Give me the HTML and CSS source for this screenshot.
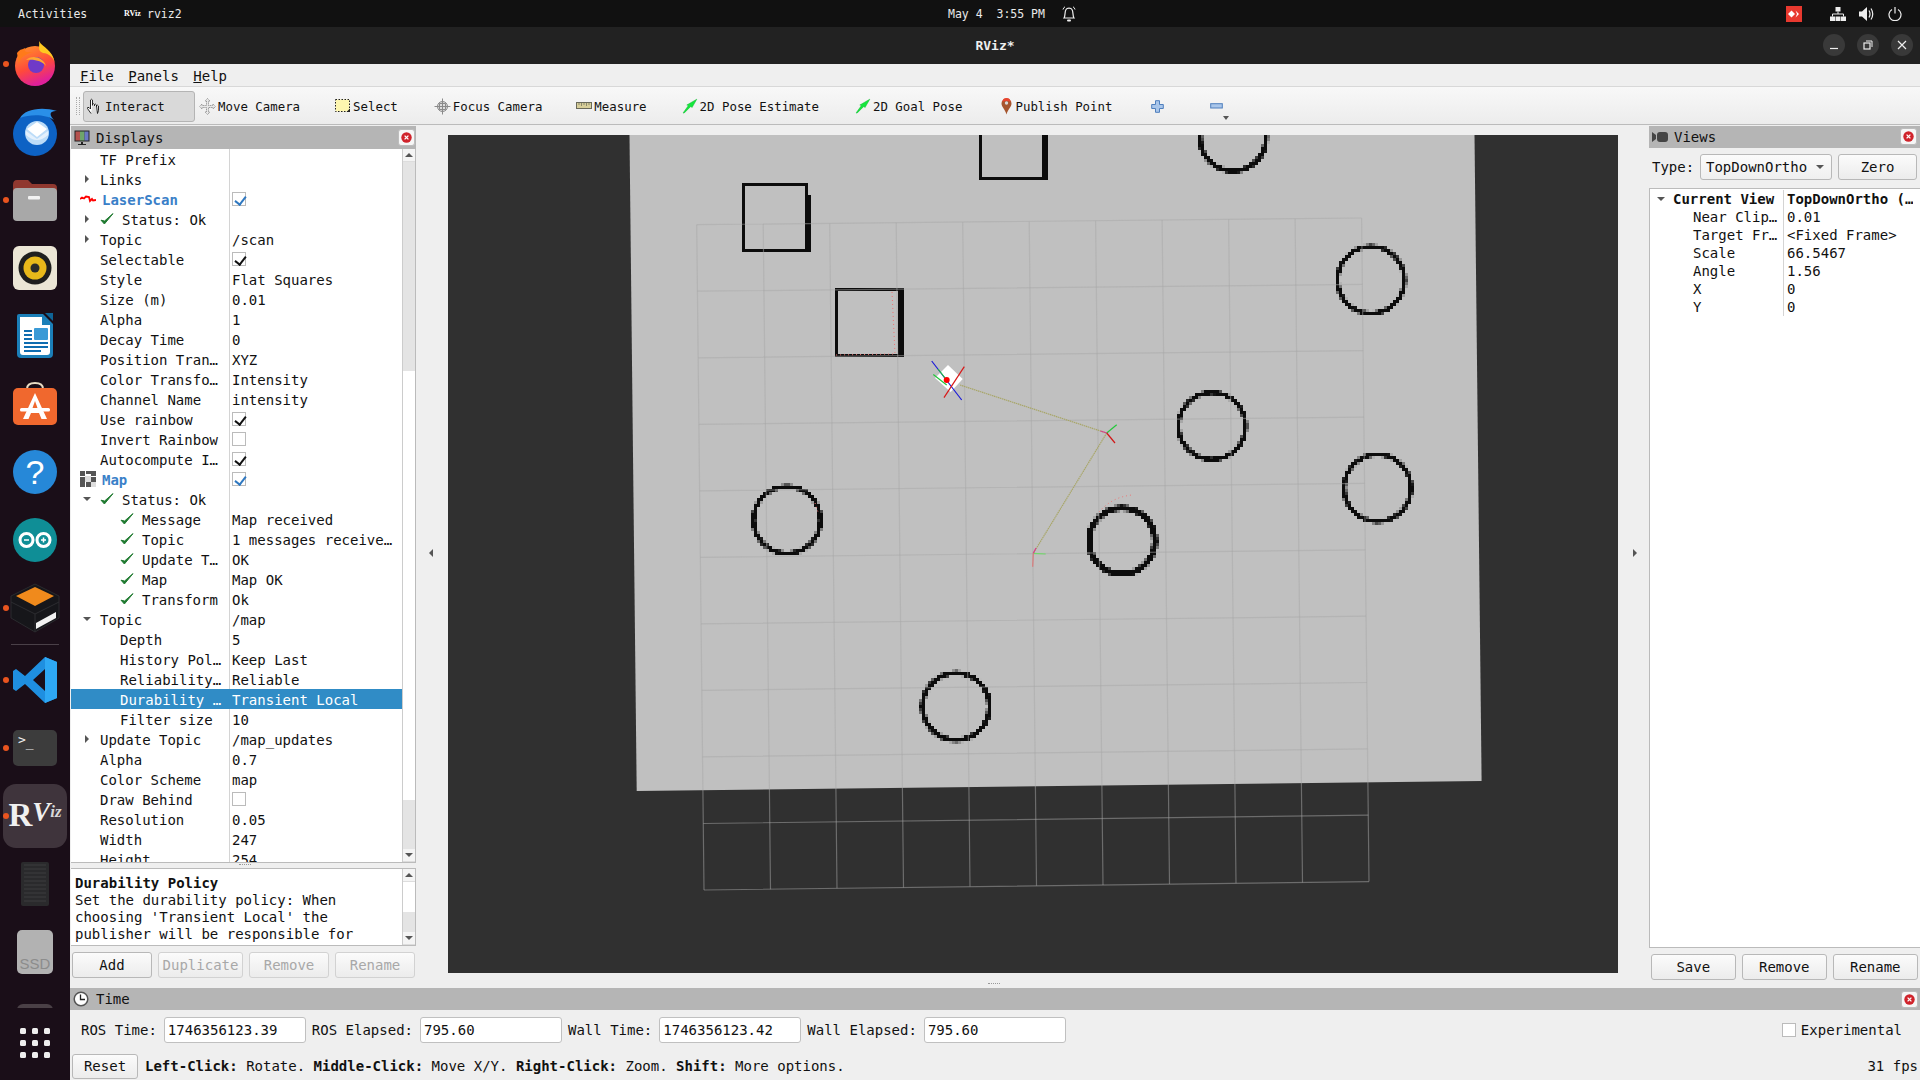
FILE: index.html
```html
<!DOCTYPE html>
<html lang="en">
<head>
<meta charset="utf-8">
<title>RViz*</title>
<link rel="stylesheet" href="styles.css">
</head>
<body>
<svg class="defs" width="0" height="0" aria-hidden="true">
  <symbol id="chk" viewBox="0 0 14 14"><path d="M1 8.200 L4.400 12 L13 1.600 L4.600 9 Z" fill="#1f7a30" stroke="#1f7a30" stroke-width="1"/></symbol>
  <symbol id="close" viewBox="0 0 17 17"><rect x=".5" y=".5" width="16" height="16" rx="2.500" fill="#f6f6f6" stroke="#bdbdbd"/><circle cx="8.500" cy="8.500" r="5.200" fill="#d0232b"/><path d="M6.600 6.600 L10.400 10.400 M10.400 6.600 L6.600 10.400" stroke="#fff" stroke-width="1.300"/></symbol>
  <symbol id="arrow" viewBox="0 0 20 20"><path d="M1.500 18.500 L8 9.500 L6 8.800 L18.500 1.500 L12.500 12 L11 10.500 L2.500 19 Z" fill="#14e83c" stroke="#0bb52c" stroke-width=".6"/></symbol>
  <filter id="px" filterUnits="userSpaceOnUse" x="448" y="135" width="1170" height="838" primitiveUnits="userSpaceOnUse" color-interpolation-filters="sRGB">
    <feFlood x="449" y="136" width="1" height="1" flood-color="#000"/>
    <feComposite x="448" y="135" width="3" height="3"/>
    <feTile result="a"/>
    <feComposite in="SourceGraphic" in2="a" operator="in"/>
    <feMorphology operator="dilate" radius="1"/>
  </filter>
</svg>

<header class="topbar">
  <span class="tb-act">Activities</span>
  <span class="tb-logo">RViz</span>
  <span class="tb-app">rviz2</span>
  <span class="tb-clock">May 4&nbsp;&nbsp;3:55 PM</span>
  <svg class="tb-bell" width="14" height="16" viewBox="0 0 14 16"><path d="M2 12 C3.500 10 2.500 6 4 3.500 C5 1.600 9 1.600 10 3.500 C11.500 6 10.500 10 12 12 Z" fill="none" stroke="#eee" stroke-width="1.200"/><path d="M1 3.500 Q1.500 1.500 3 .8 M13 3.500 Q12.500 1.500 11 .8" fill="none" stroke="#eee"/><rect x="5" y="13.500" width="4" height="2" rx="1" fill="#eee"/></svg>
  <div class="tb-right">
    <svg class="tb-any" width="16" height="16" viewBox="0 0 16 16"><rect width="16" height="16" fill="#e8392f"/><path d="M5.500 4.500 L9 8 L5.500 11.500 L2 8 Z" fill="#fff"/><path d="M9.500 4.500 L13 8 L9.500 11.500 L11 8 Z" fill="#fff"/></svg>
    <svg class="tb-net" width="16" height="14" viewBox="0 0 16 14"><path d="M5.500 0H10.500V4.500H5.500ZM0 9.500H5V14H0ZM11 9.500H16V14H11ZM5.500 9.500H10.500V14H5.500Z" fill="#eee"/><path d="M8 4.500V7M2.500 9.500V7H13.500V9.500" stroke="#eee" fill="none"/></svg>
    <svg class="tb-vol" width="16" height="16" viewBox="0 0 16 16"><path d="M0 5.500H3L8 1V15L3 10.500H0Z" fill="#eee"/><path d="M10 4.500Q12 8 10 11.500M12 2.500Q15.500 8 12 13.500" fill="none" stroke="#eee" stroke-width="1.200"/></svg>
    <svg class="tb-pow" width="14" height="14" viewBox="0 0 14 14"><path d="M4 2.500A6 6 0 1 0 10 2.500M7 0V6.500" fill="none" stroke="#eee" stroke-width="1.200"/></svg>
  </div>
</header>

<div class="desk">
  <nav class="dock">
    <div class="dock-list">
      <div class="slot"><i class="dot"></i><svg width="44" height="46" viewBox="0 0 44 46"><defs><linearGradient id="ff" x1="0" y1="0" x2=".4" y2="1"><stop offset="0" stop-color="#ff9a2a"/><stop offset=".6" stop-color="#ff4a3a"/><stop offset="1" stop-color="#e0209a"/></linearGradient></defs><circle cx="22" cy="25" r="20" fill="url(#ff)"/><path d="M26 0C29 6 41 9 42 24C42 18 36 12 30 12C24 10 27 5 26 0Z" fill="#ffc820"/><path d="M4 12C8 7 9 9 12 7C11 12 14 11 20 11C12 13 6 17 6 24Z" fill="#ff7a1a"/><circle cx="23" cy="24" r="8" fill="#6f3ac8"/><path d="M13 19C18 14 30 15 33 25C29 20 22 18 13 19Z" fill="#ffa830"/></svg></div>
      <div class="slot"><svg width="50" height="48" viewBox="0 0 50 48"><circle cx="25" cy="26" r="22" fill="#0d62c4"/><path d="M10 10C14 2 30-2 47 3C38 3 40 8 44 12C36 6 20 6 10 10Z" fill="#2a8fe8"/><circle cx="27" cy="25" r="12" fill="#bcdcf8"/><path d="M17 21L27 29L37 21L27 14Z" fill="#fff"/><path d="M16 23L27 31L38 23V27Q27 37 16 27Z" fill="#e4f0fc"/></svg></div>
      <div class="slot"><i class="dot"></i><svg width="46" height="42" viewBox="0 0 46 42"><path d="M1 6Q1 1 5 1H16L20 5H41Q45 5 45 9V20H1Z" fill="#90382f"/><rect x="1" y="9" width="44" height="33" rx="4" fill="#a8a8a8"/><rect x="16" y="17" width="12" height="3.500" rx="1" fill="#f2f2f2"/></svg></div>
      <div class="slot"><svg width="46" height="46" viewBox="0 0 46 46"><rect x="1" y="1" width="44" height="44" rx="6" fill="#ece6d6"/><circle cx="23" cy="23" r="16.500" fill="#1f1f1f"/><circle cx="23" cy="23" r="11.500" fill="#e8b81a"/><circle cx="23" cy="23" r="4.500" fill="#2a2a2a"/></svg></div>
      <div class="slot"><svg width="38" height="46" viewBox="0 0 38 46"><path d="M3 1H27L37 11V41Q37 45 33 45H5Q1 45 1 41V3Q1 1 3 1Z" fill="#1b7fb8"/><path d="M4 4H26V12H34V39Q34 42 31 42H7Q4 42 4 39Z" fill="#fff"/><path d="M29 0H37V8Z" fill="#0f6496"/><rect x="8" y="17" width="8" height="2" fill="#0f6db0"/><rect x="8" y="21" width="8" height="2" fill="#0f6db0"/><rect x="8" y="25" width="8" height="2" fill="#0f6db0"/><rect x="18" y="15" width="14" height="12" rx="1" fill="#3a9ad6"/><rect x="8" y="29" width="24" height="2" fill="#0f6db0"/><rect x="8" y="33" width="24" height="2" fill="#0f6db0"/><rect x="8" y="37" width="17" height="2" fill="#0f6db0"/></svg></div>
      <div class="slot"><svg width="46" height="44" viewBox="0 0 46 44"><path d="M15 7Q15 1 23 1Q31 1 31 7" fill="none" stroke="#e8dcc4" stroke-width="2"/><rect x="1" y="6" width="44" height="37" rx="5" fill="#f0682e"/><path d="M23 11L35 37H29.500L27 31H19L16.500 37H11Z" fill="#fff"/><path d="M23 19L20.500 26H25.500Z" fill="#f0682e"/><rect x="8" y="26" width="30" height="3.500" rx="1.500" fill="#fff"/></svg></div>
      <div class="slot"><div class="help">?</div></div>
      <div class="slot"><svg width="44" height="44" viewBox="0 0 44 44"><circle cx="22" cy="22" r="22" fill="#0f8e96"/><circle cx="13.500" cy="22" r="6.500" fill="none" stroke="#fff" stroke-width="3"/><circle cx="30.500" cy="22" r="6.500" fill="none" stroke="#fff" stroke-width="3"/><path d="M28 22H33M30.500 19.500V24.500M11 22H16" stroke="#fff" stroke-width="1.500"/></svg></div>
      <div class="slot"><i class="dot"></i><svg width="50" height="50" viewBox="0 0 50 50"><path d="M25 1L49 13V35L25 49L1 35V13Z" fill="#16161a" stroke="#2a2a2e"/><path d="M25 4L44 13L25 23L6 13Z" fill="#f08a1c"/><path d="M1 19L25 31L49 19M25 31V49" fill="none" stroke="#2c2c30"/><path d="M26 40L46 29V35L26 46Z" fill="#f2f2f2"/></svg></div>
      <div class="sep"></div>
      <div class="slot"><i class="dot"></i><svg width="44" height="46" viewBox="0 0 44 46"><path d="M32 0L44 5V41L32 46L12 27L3 34L0 32V14L3 12L12 19ZM32 12L20 23L32 34Z" fill="#1f8fe0"/><path d="M32 0L44 5V41L32 46Z" fill="#2ea8f4"/></svg></div>
      <div class="slot"><i class="dot"></i><div class="term"><span class="term-p">&gt;</span><span class="term-u">_</span></div></div>
      <div class="slot slot-on"><i class="dot"></i><div class="rviz-logo"><span class="rv-r">R</span><span class="rv-v">V</span><span class="rv-i">iz</span></div></div>
      <div class="slot"><svg width="30" height="46" viewBox="0 0 30 46"><rect x="1" y="1" width="28" height="44" rx="2" fill="#2a2a2c"/><path d="M4 4H26M4 8H26M4 12H26M4 16H26M4 20H26M4 24H26M4 28H26M4 32H26M4 36H26M4 40H26" stroke="#3c3c3e"/></svg></div>
      <div class="slot"><div class="ssd">SSD</div></div>
      <div class="slot"><div class="disk"></div></div>
    </div>
    <div class="apps">
      <div class="apps-grid"><i></i><i></i><i></i><i></i><i></i><i></i><i></i><i></i><i></i></div>
    </div>
  </nav>

  <div class="win">
    <div class="titlebar">
      <span class="title-text">RViz*</span>
      <div class="winbtns">
        <span class="wb"><svg width="10" height="10" viewBox="0 0 10 10"><path d="M1 8.500H9" stroke="#eee" stroke-width="1.200"/></svg></span>
        <span class="wb"><svg width="10" height="10" viewBox="0 0 10 10"><rect x="1" y="3" width="6" height="6" fill="none" stroke="#eee" stroke-width="1.200"/><path d="M3 1H9V7" fill="none" stroke="#eee"/></svg></span>
        <span class="wb"><svg width="10" height="10" viewBox="0 0 10 10"><path d="M1 1L9 9M9 1L1 9" stroke="#eee" stroke-width="1.200"/></svg></span>
      </div>
    </div>

    <div class="menubar"><span class="mi"><u>F</u>ile</span><span class="mi"><u>P</u>anels</span><span class="mi"><u>H</u>elp</span></div>

    <div class="toolbar">
      <div class="grip"></div>
      <div class="tool tool-on"><svg width="17" height="17" viewBox="0 0 17 17"><path d="M5 15.500L1.500 10.500Q1 9 3 9.500L4.500 11V2Q5.500 .5 6.500 2V7.500M6.500 6.500Q7.500 5 8.500 6.500V8M8.500 6.500Q9.500 5.500 10.500 7V8.500M10.500 7.500Q11.500 6.500 12.500 8V12.500L11.500 15.500Z" fill="#fff" stroke="#111" stroke-width=".9"/></svg><span>Interact</span></div>
      <div class="tool t-move"><svg width="17" height="17" viewBox="0 0 17 17"><path d="M8.500 .5L11 3H9.500V7.500H14V6L16.500 8.500L14 11V9.500H9.500V14H11L8.500 16.500L6 14H7.500V9.500H3V11L.5 8.500L3 6V7.500H7.500V3H6Z" fill="#e8e8e8" stroke="#777" stroke-width=".7" stroke-dasharray="1.200 .6"/></svg><span>Move Camera</span></div>
      <div class="tool t-sel"><svg width="16" height="15" viewBox="0 0 16 15"><rect x=".5" y=".5" width="14" height="12" fill="#fdf6b0" stroke="#222" stroke-dasharray="1.500 1.500"/><path d="M11.500 13L15 13L15 9.500Z" fill="#222"/></svg><span>Select</span></div>
      <div class="tool t-foc"><svg width="17" height="17" viewBox="0 0 17 17"><circle cx="8.500" cy="8.500" r="5" fill="#ddd" stroke="#888"/><path d="M8.500 .5V16.500M.5 8.500H16.500M5.500 5.500V11.500M11.500 5.500V11.500M5.500 5.500H11.500M5.500 11.500H11.500" stroke="#8a8a8a" stroke-width="1" fill="none"/></svg><span>Focus Camera</span></div>
      <div class="tool t-mea"><svg width="16" height="8" viewBox="0 0 16 8"><rect x=".5" y=".5" width="15" height="6" fill="#d8cf9a" stroke="#6a6a5a"/><path d="M3 1V3M5.500 1V4M8 1V3M10.500 1V4M13 1V3" stroke="#6a6a5a" stroke-width=".7"/></svg><span>Measure</span></div>
      <div class="tool t-pe"><svg width="16" height="16"><use href="#arrow"/></svg><span>2D Pose Estimate</span></div>
      <div class="tool t-gp"><svg width="16" height="16"><use href="#arrow"/></svg><span>2D Goal Pose</span></div>
      <div class="tool t-pub"><svg width="11" height="17" viewBox="0 0 11 17"><path d="M5.500 16.500C4 11 .5 9 .5 5.500A5 5 0 0 1 10.500 5.500C10.500 9 7 11 5.500 16.500Z" fill="#a5552e"/><path d="M1.500 4A4 4 0 0 1 9.500 4C8 2.500 3 2.500 1.500 4Z" fill="#e8452e"/><circle cx="5.500" cy="5" r="1.700" fill="#d8d8d8"/></svg><span>Publish Point</span></div>
      <div class="tool t-plus"><svg width="13" height="13" viewBox="0 0 13 13"><path d="M4.500 .7H8.500V4.500H12.300V8.500H8.500V12.300H4.500V8.500H.7V4.500H4.500Z" fill="#a9c6ea" stroke="#4f7fbd"/></svg></div>
      <div class="tool t-minus"><svg width="13" height="6" viewBox="0 0 13 6"><rect x=".7" y=".7" width="11.600" height="4.300" fill="#a9c6ea" stroke="#4f7fbd"/></svg></div>
      <i class="tool-more"></i>
    </div>

    <div class="main">
      <section class="left">
        <div class="phead"><svg width="16" height="16" viewBox="0 0 16 16"><rect x=".5" y=".5" width="15" height="11" fill="#222"/><rect x="1.500" y="1.500" width="4.500" height="9" fill="#b5524e"/><rect x="6" y="1.500" width="4.500" height="9" fill="#6fa56a"/><rect x="10.500" y="1.500" width="4" height="9" fill="#6a78c4"/><path d="M7 12H9V14H12V15H4V14H7Z" fill="#222"/></svg><span>Displays</span><svg class="pclose" width="17" height="17"><use href="#close"/></svg></div>

        <div class="treebox">
          <div class="tree">
            <div class="row"><div class="n i1">TF Prefix</div><div class="v"></div></div>
            <div class="row"><div class="n"><i class="tw r"></i>Links</div><div class="v"></div></div>
            <div class="row"><div class="n i0"><svg class="ic" width="16" height="16" viewBox="0 0 16 16"><path d="M0 8L2 6.500L4 7.500L6 5.500L9 6L10 10L12 8L13 9.500L16 9" fill="none" stroke="#f00" stroke-width="1.800"/></svg><b class="top">LaserScan</b></div><div class="v"><span class="cb cb-b"></span></div></div>
            <div class="row"><div class="n"><i class="tw r"></i><svg class="ck" width="14" height="14"><use href="#chk"/></svg>Status: Ok</div><div class="v"></div></div>
            <div class="row"><div class="n"><i class="tw r"></i>Topic</div><div class="v">/scan</div></div>
            <div class="row"><div class="n i1">Selectable</div><div class="v"><span class="cb cb-k"></span></div></div>
            <div class="row"><div class="n i1">Style</div><div class="v">Flat Squares</div></div>
            <div class="row"><div class="n i1">Size (m)</div><div class="v">0.01</div></div>
            <div class="row"><div class="n i1">Alpha</div><div class="v">1</div></div>
            <div class="row"><div class="n i1">Decay Time</div><div class="v">0</div></div>
            <div class="row"><div class="n i1">Position Tran…</div><div class="v">XYZ</div></div>
            <div class="row"><div class="n i1">Color Transfo…</div><div class="v">Intensity</div></div>
            <div class="row"><div class="n i1">Channel Name</div><div class="v">intensity</div></div>
            <div class="row"><div class="n i1">Use rainbow</div><div class="v"><span class="cb cb-k"></span></div></div>
            <div class="row"><div class="n i1">Invert Rainbow</div><div class="v"><span class="cb"></span></div></div>
            <div class="row"><div class="n i1">Autocompute I…</div><div class="v"><span class="cb cb-k"></span></div></div>
            <div class="row"><div class="n i0"><svg class="ic" width="16" height="16" viewBox="0 0 16 16"><path d="M0 0H5V5H0ZM6 0H11V3H6ZM11 0H16V5H11ZM0 6H5V11H0ZM0 11H5V16H0ZM6 11H11V16H6ZM11 6H16V11H11Z" fill="#555"/><path d="M5 5H11V11H5ZM11 11H16V16H11Z" fill="#ddd"/></svg><b class="top">Map</b></div><div class="v"><span class="cb cb-b"></span></div></div>
            <div class="row"><div class="n"><i class="tw d"></i><svg class="ck" width="14" height="14"><use href="#chk"/></svg>Status: Ok</div><div class="v"></div></div>
            <div class="row"><div class="n i2"><svg class="ck" width="14" height="14"><use href="#chk"/></svg>Message</div><div class="v">Map received</div></div>
            <div class="row"><div class="n i2"><svg class="ck" width="14" height="14"><use href="#chk"/></svg>Topic</div><div class="v">1 messages receive…</div></div>
            <div class="row"><div class="n i2"><svg class="ck" width="14" height="14"><use href="#chk"/></svg>Update T…</div><div class="v">OK</div></div>
            <div class="row"><div class="n i2"><svg class="ck" width="14" height="14"><use href="#chk"/></svg>Map</div><div class="v">Map OK</div></div>
            <div class="row"><div class="n i2"><svg class="ck" width="14" height="14"><use href="#chk"/></svg>Transform</div><div class="v">Ok</div></div>
            <div class="row"><div class="n"><i class="tw d"></i>Topic</div><div class="v">/map</div></div>
            <div class="row"><div class="n i2">Depth</div><div class="v">5</div></div>
            <div class="row"><div class="n i2">History Pol…</div><div class="v">Keep Last</div></div>
            <div class="row"><div class="n i2">Reliability…</div><div class="v">Reliable</div></div>
            <div class="row row-sel"><div class="n i2">Durability …</div><div class="v">Transient Local</div></div>
            <div class="row"><div class="n i2">Filter size</div><div class="v">10</div></div>
            <div class="row"><div class="n"><i class="tw r"></i>Update Topic</div><div class="v">/map_updates</div></div>
            <div class="row"><div class="n i1">Alpha</div><div class="v">0.7</div></div>
            <div class="row"><div class="n i1">Color Scheme</div><div class="v">map</div></div>
            <div class="row"><div class="n i1">Draw Behind</div><div class="v"><span class="cb"></span></div></div>
            <div class="row"><div class="n i1">Resolution</div><div class="v">0.05</div></div>
            <div class="row"><div class="n i1">Width</div><div class="v">247</div></div>
            <div class="row"><div class="n i1">Height</div><div class="v">254</div></div>
          </div>
          <div class="sbar"><div class="sb-btn"><i class="up"></i></div><div class="sb-a"></div><div class="sb-w"></div><div class="sb-b"></div><div class="sb-btn"><i class="down"></i></div></div>
        </div>

        <div class="descbox">
          <div class="desc"><b>Durability Policy</b><br>Set the durability policy: When<br>choosing 'Transient Local' the<br>publisher will be responsible for<br>persisting samples for</div>
          <div class="sbar"><div class="sb-btn"><i class="up"></i></div><div class="sb-w2"></div><div class="sb-c"></div><div class="sb-btn"><i class="down"></i></div></div>
        </div>

        <div class="lbtns">
          <span class="btn b-add">Add</span><span class="btn off b-dup">Duplicate</span><span class="btn off b-rem">Remove</span><span class="btn off b-ren">Rename</span>
        </div>
      </section>

      <div class="split split-l"><i class="tri-l"></i></div>

      <div class="render">
        <svg class="scene" width="1170" height="838" viewBox="448 135 1170 838">
          <polygon points="629.500,135 1474.500,135 1481.600,781 636.700,791" fill="#c0c0c0"/>
          <g class="obst" filter="url(#px)">
            <path d="M743 184H806V250H743Z" stroke-width="3.500"/>
            <rect class="fill" x="741" y="183" width="5" height="25"/>
            <rect class="fill" x="804" y="194" width="6" height="57"/>
            <path d="M836 290H901V355H836Z" stroke-width="3.500"/>
            <rect class="fill" x="897" y="288" width="6" height="69"/>
            <rect class="fill" x="834" y="353" width="62" height="3"/>
            <path d="M980 130V178.500H1047V130" stroke-width="4"/>
            <rect class="fill" x="1043" y="130" width="5" height="50"/>
            <circle cx="1233" cy="138" r="33" stroke-width="5"/>
            <circle cx="1371" cy="280" r="33.500" stroke-width="4.500"/>
            <circle cx="1212" cy="426" r="33.500" stroke-width="4.500"/>
            <circle cx="1377.500" cy="488" r="33.500" stroke-width="4.500"/>
            <circle cx="787" cy="520" r="33.500" stroke-width="4.500"/>
            <circle cx="1122" cy="541" r="33" stroke-width="6"/>
            <circle cx="956" cy="706.500" r="33.500" stroke-width="5"/>
          </g>
          <g class="grid">
            <path d="M696.700 224.700L704 890M763.200 224L770.500 889.200M829.700 223.400L837 888.300M896.200 222.700L903.500 887.500M962.700 222L970 886.600M1029.200 221.400L1036.500 885.800M1095.600 220.700L1103 885M1162.100 220L1169.500 884.100M1228.600 219.300L1236 883.300M1295.100 218.700L1302.500 882.400M1361.600 218L1369 881.600"/>
            <path d="M696.700 224.700L1361.600 218M697.400 291.200L1362.300 284.400M698.200 357.800L1363.100 350.700M698.900 424.300L1363.800 417.100M699.600 490.800L1364.600 483.400M700.400 557.400L1365.300 549.800M701.100 623.900L1366 616.200M701.800 690.400L1366.800 682.500M702.500 756.900L1367.500 748.900M703.300 823.500L1368.300 815.200M704 890L1369 881.600"/>
          </g>
          <g class="scan">
            <path d="M892 292L895 354L834 355"/>
            <path d="M1099 512Q1112 497 1132 495"/>
            <path d="M815 503L818 512"/>
          </g>
          <g class="tf">
            <path d="M960 385L1106.700 433M1106.700 433L1033.300 553.300" stroke="#a8a668" stroke-dasharray="1.500 .6"/>
            <path d="M1106.700 433L1116.700 424.700" stroke="#22c83a"/>
            <path d="M1106.700 433L1115 443" stroke="#d01818"/>
            <path d="M1106.700 433L1100.500 431" stroke="#d8408a"/>
            <path d="M1033.300 553.300L1045.700 554" stroke="#6fd868"/>
            <path d="M1033.300 553.300L1032.700 566.700" stroke="#d87a7a"/>
            <path d="M1033.300 553.300L1036 548" stroke="#d8408a"/>
          </g>
          <polygon points="948,365 962.700,379 950.700,392 935,378" fill="#fff"/>
          <g class="tf">
            <path d="M931.700 361L961.700 400" stroke="#1a1ad8"/>
            <path d="M964.300 366.700L944 397.700" stroke="#d81818"/>
            <path d="M933.300 374.500L946.700 385M946.700 380L938 369" stroke="#22c83a"/>
          </g>
          <circle cx="946.700" cy="380" r="3" fill="#f00"/>
        </svg>
      </div>

      <div class="split split-r"><i class="tri-r"></i></div>

      <section class="right">
        <div class="phead rhead"><svg width="16" height="10" viewBox="0 0 16 10"><path d="M0 0L4 3V7L0 10Z" fill="#444"/><rect x="5" y="0" width="11" height="10" rx="3" fill="#444"/></svg><span>Views</span><svg class="pclose" width="17" height="17"><use href="#close"/></svg></div>
        <div class="typerow">
          <span class="type-l">Type:</span>
          <span class="combo">TopDownOrtho<i class="down cb-arrow"></i></span>
          <span class="btn b-zero">Zero</span>
        </div>
        <div class="vtree">
          <div class="vrow vhead"><div class="vn"><i class="tw d"></i><b>Current View</b></div><div class="vv"><b>TopDownOrtho (…</b></div></div>
          <div class="vrow"><div class="vn in">Near Clip…</div><div class="vv">0.01</div></div>
          <div class="vrow"><div class="vn in">Target Fr…</div><div class="vv">&lt;Fixed Frame&gt;</div></div>
          <div class="vrow"><div class="vn in">Scale</div><div class="vv">66.5467</div></div>
          <div class="vrow"><div class="vn in">Angle</div><div class="vv">1.56</div></div>
          <div class="vrow"><div class="vn in">X</div><div class="vv">0</div></div>
          <div class="vrow"><div class="vn in">Y</div><div class="vv">0</div></div>
        </div>
        <div class="rbtns"><span class="btn">Save</span><span class="btn">Remove</span><span class="btn">Rename</span></div>
      </section>
      <i class="hdots hdots-main"></i>
      <i class="hdots hdots-tree"></i>
    </div>

    <section class="timep">
      <div class="phead thead"><svg width="16" height="16" viewBox="0 0 16 16"><circle cx="8" cy="8" r="6.800" fill="#fff" stroke="#555" stroke-width="1.500"/><path d="M7.500 3.500V8.500H12" fill="none" stroke="#222" stroke-width="1.300"/></svg><span>Time</span><svg class="pclose" width="17" height="17"><use href="#close"/></svg></div>
      <div class="timerow">
        <span class="tl">ROS Time:</span><span class="field">1746356123.39</span>
        <span class="tl">ROS Elapsed:</span><span class="field">795.60</span>
        <span class="tl">Wall Time:</span><span class="field">1746356123.42</span>
        <span class="tl">Wall Elapsed:</span><span class="field">795.60</span>
        <span class="exp"><span class="cb"></span>Experimental</span>
      </div>
      <div class="statusrow">
        <span class="btn b-reset">Reset</span>
        <span class="hint"><b>Left-Click:</b> Rotate. <b>Middle-Click:</b> Move X/Y. <b>Right-Click:</b> Zoom. <b>Shift:</b> More options.</span>
        <span class="fps">31 fps</span>
      </div>
    </section>
  </div>
</div>
</body>
</html>
```
FILE: styles.css
```css
* { box-sizing: border-box; }
html, body { margin: 0; height: 100%; }
body {
  width: 1920px; height: 1080px; overflow: hidden;
  font-family: "DejaVu Sans Mono", "Liberation Mono", monospace;
  font-size: 14px; color: #111; background: #efefef;
  display: flex; flex-direction: column;
}
.defs { position: absolute; }
i { font-style: normal; display: block; }

/* top bar */
.topbar { height: 27px; flex: none; background: #111; color: #eaeaea; font-size: 11.5px; display: flex; align-items: center; padding-left: 18px; position: relative; }
.tb-act { width: 106px; }
.tb-logo { width: 23px; font: bold 8px "Liberation Serif", serif; color: #fff; }
.tb-app { width: 801px; }
.tb-clock { width: 114px; }
.tb-bell { flex: none; }
.tb-right { margin-left: auto; display: flex; align-items: center; }
.tb-any { margin-right: 28px; }
.tb-net { margin-right: 13px; }
.tb-vol { margin-right: 13px; }
.tb-pow { margin-right: 18px; }

.desk { flex: 1; display: flex; min-height: 0; }

/* dock */
.dock { width: 70px; flex: none; background: #1a0e18; display: flex; flex-direction: column; }
.dock-list { flex: 1; min-height: 0; overflow: hidden; padding-top: 3px; }
.slot { height: 68px; display: flex; align-items: center; justify-content: center; position: relative; }
.slot-on::before { content: ""; position: absolute; left: 3px; top: 2px; width: 64px; height: 64px; border-radius: 13px; background: #3f343c; }
.slot > * { position: relative; }
.slot > .dot { position: absolute; left: 3px; top: 31px; width: 6px; height: 6px; border-radius: 50%; background: #e9541f; z-index: 2; }
.sep { height: 1px; width: 48px; margin: 2px auto 1px; background: #4a4048; }
.help { width: 44px; height: 44px; border-radius: 50%; background: #2688d8; color: #fff; font: 34px/44px "Liberation Sans", sans-serif; text-align: center; }
.term { width: 44px; height: 36px; border-radius: 5px; background: #3c3c3c; color: #eee; font-size: 13px; line-height: 1; padding: 3px 0 0 5px; display: flex; }
.term-u { margin-top: 3px; }
.rviz-logo { color: #f0f0f0; font-family: "Liberation Serif", serif; font-weight: bold; display: flex; align-items: flex-start; height: 34px; line-height: 1; }
.rv-r { font-size: 33px; }
.rv-v { font-size: 27px; font-style: italic; }
.rv-i { font-size: 17px; margin-top: 4px; color: #d8d8d8; font-style: italic; }
.ssd { width: 36px; height: 44px; border-radius: 5px; background: #b2b2b2; color: #8c8c8c; font: 15px/1 "Liberation Sans", sans-serif; display: flex; align-items: flex-end; justify-content: center; padding-bottom: 3px; }
.disk { width: 36px; height: 44px; border-radius: 6px; background: #4a4046; margin-top: 12px; }
.apps { height: 72px; flex: none; background: #1a0e18; display: flex; align-items: center; justify-content: center; padding-bottom: 2px; }
.apps-grid { display: grid; grid-template-columns: repeat(3, 6px); gap: 6px; }
.apps-grid i { width: 6px; height: 6px; background: #eee; border-radius: 1.500px; }

/* window */
.win { flex: 1; min-width: 0; display: flex; flex-direction: column; }
.titlebar { height: 37px; flex: none; background: #222; color: #eee; display: flex; align-items: center; justify-content: center; position: relative; }
.title-text { font-size: 13px; font-weight: bold; }
.winbtns { position: absolute; right: 7px; top: 7px; display: flex; gap: 12px; }
.wb { width: 22px; height: 22px; border-radius: 50%; background: #393939; display: flex; align-items: center; justify-content: center; }

.menubar { height: 23px; flex: none; background: #efefef; border-bottom: 1px solid #d8d8d8; display: flex; padding-left: 10px; gap: 14.500px; align-items: center; padding-top: 1px; }

.toolbar { height: 38px; flex: none; background: linear-gradient(#f8f8f8, #ececec); border-bottom: 1px solid #bbb; display: flex; align-items: center; padding-left: 6px; padding-top: 1px; font-size: 12.4px; position: relative; }
.grip { width: 4px; height: 18px; margin-right: 3px; border-left: 1px dotted #aaa; border-right: 1px dotted #aaa; }
.tool { display: flex; align-items: center; gap: 2px; flex: none; }
.tool svg { flex: none; }
.tool-on { width: 112px; height: 31px; background: #d9d9d9; border: 1px solid #b4b4b4; border-radius: 3px; padding-left: 2px; }
.t-move { margin-left: 4px; }
.t-sel { margin-left: 35px; }
.t-foc { margin-left: 36px; }
.t-mea { margin-left: 34px; }
.t-pe { margin-left: 35px; }
.t-gp { margin-left: 36px; }
.t-pub { margin-left: 39px; gap: 3px; }
.t-plus { margin-left: 39px; }
.t-minus { margin-left: 46px; }
.tool-more { position: absolute; left: 1153px; top: 29px; width: 0; height: 0; border: 3px solid transparent; border-top: 4px solid #555; border-bottom: 0; }

.main { flex: 1; min-height: 0; display: flex; position: relative; padding-top: 1px; }
.left { width: 345px; flex: none; display: flex; flex-direction: column; margin-left: 1px; height: 853px; }
.phead { height: 23px; flex: none; background: #b5b5b5; display: flex; align-items: center; padding-left: 3px; gap: 6px; position: relative; }
.pclose { position: absolute; right: 1px; top: 3px; }

.treebox { height: 714px; flex: none; display: flex; background: #fff; border-right: 1px solid #bbb; border-bottom: 1px solid #bbb; overflow: hidden; }
.tree { flex: 1; min-width: 0; overflow: hidden; }
.row { height: 20px; display: flex; line-height: 20px; background: #fff; }
.n { width: 158px; flex: none; display: flex; align-items: center; white-space: pre; overflow: hidden; padding-top: 2px; }
.v { flex: 1; border-left: 1px solid #d4d4d4; padding-left: 2px; padding-top: 2px; white-space: pre; display: flex; align-items: center; }
.i0 { padding-left: 9px; }
.i1 { padding-left: 29px; }
.i2 { padding-left: 49px; }
.tw { width: 29px; flex: none; height: 20px; position: relative; }
.n .tw, .n .ck, .n .ic, .v .cb { margin-top: -2px; }
.tw::after { content: ""; position: absolute; width: 0; height: 0; border: 4px solid transparent; }
.tw.r::after { left: 14px; top: 6px; border-left: 4px solid #555; border-right: 0; }
.tw.d::after { left: 12px; top: 8px; border-top: 4px solid #555; border-bottom: 0; }
.ic { margin-right: 6px; flex: none; }
.ck { margin-right: 8px; flex: none; }
.top { color: #3a80c8; font-weight: bold; }
.row-sel { background: #308cc6; color: #fff; }
.row-sel .v { border-left-color: #308cc6; }
.cb { width: 14px; height: 14px; border: 1px solid #bbb; background: #fff; display: inline-block; position: relative; flex: none; }
.cb-k::after, .cb-b::after { content: ""; position: absolute; left: 4px; top: 1px; width: 5px; height: 9px; border: solid #111; border-width: 0 2px 2px 0; transform: rotate(38deg); }
.cb-b::after { border-color: #2f78c0; }

.sbar { width: 13px; flex: none; display: flex; flex-direction: column; background: #fff; border-left: 1px solid #ccc; }
.sb-btn { height: 13px; flex: none; background: #f4f4f4; display: flex; align-items: center; justify-content: center; border-bottom: 1px solid #ddd; }
.up { width: 0; height: 0; border: 4px solid transparent; border-bottom: 4px solid #555; border-top: 0; }
.down { width: 0; height: 0; border: 4px solid transparent; border-top: 4px solid #555; border-bottom: 0; }
.sb-a { height: 209px; background: #e4e4e4; }
.sb-w { flex: 1; }
.sb-b { height: 49px; background: #e4e4e4; }
.sb-w2 { flex: 1; }
.sb-c { height: 20px; background: #e4e4e4; }

.descbox { height: 78px; flex: none; margin-top: 5px; display: flex; background: #fff; border: 1px solid #bbb; border-left: 0; }
.desc { flex: 1; line-height: 17px; padding: 6px 0 0 4px; overflow: hidden; white-space: pre; }

.btn { height: 26px; display: inline-flex; align-items: center; justify-content: center; border: 1px solid #b8b8b8; border-radius: 3px; background: linear-gradient(#fbfbfb, #ececec); color: #111; flex: none; }
.off { color: #a8a8a8; border-color: #d2d2d2; }
.lbtns { display: flex; margin-top: 6px; padding-left: 1px; }
.b-add { width: 80px; }
.b-dup { width: 85px; margin-left: 6px; }
.b-rem { width: 80px; margin-left: 6px; }
.b-ren { width: 80px; margin-left: 6px; }

.split { flex: none; display: flex; align-items: center; justify-content: center; height: 853px; }
.split-l { width: 32px; }
.split-r { width: 31px; }
.tri-l { width: 0; height: 0; border: 4px solid transparent; border-right: 4px solid #555; border-left: 0; margin-right: 2px; }
.tri-r { width: 0; height: 0; border: 4px solid transparent; border-left: 4px solid #555; border-right: 0; margin-left: 2px; }

.render { width: 1170px; height: 838px; flex: none; margin-top: 9px; background: #303030; overflow: hidden; }
.scene { display: block; }
.grid path { stroke: rgba(168,168,168,.5); stroke-width: 1.200; fill: none; }
.obst > * { fill: none; stroke: #0c0c0c; }
.obst > .fill { fill: #0c0c0c; stroke: none; }
.scan path { fill: none; stroke: #f07070; stroke-dasharray: 1 3; stroke-width: 1; }
.tf path { fill: none; stroke-width: 1.200; }

.right { width: 271px; flex: none; display: flex; flex-direction: column; height: 853px; }
.rhead { height: 22px; gap: 6px; }
.rhead .pclose { right: 3px; top: 2px; }
.typerow { height: 26px; flex: none; margin-top: 6px; display: flex; align-items: center; padding-left: 3px; }
.type-l { width: 48px; }
.combo { width: 132px; height: 26px; border: 1px solid #b8b8b8; border-radius: 3px; background: linear-gradient(#fbfbfb, #efefef); display: flex; align-items: center; padding-left: 5px; justify-content: space-between; padding-right: 7px; }
.b-zero { width: 79px; margin-left: 6px; }
.vtree { height: 760px; flex: none; margin-top: 8px; background: #fff; border: 1px solid #bbb; border-right: 0; padding-top: 1px; }
.vrow { height: 18px; display: flex; line-height: 18px; white-space: pre; }
.vn { width: 134px; flex: none; display: flex; border-right: 1px solid #d4d4d4; overflow: hidden; }
.vn .tw { width: 23px; height: 18px; }
.vn .tw.d::after { left: 7px; top: 7px; }
.vn.in { padding-left: 43px; }
.vv { padding-left: 3px; overflow: hidden; }
.rbtns { display: flex; padding-left: 2px; gap: 6.500px; margin-top: 6px; }
.rbtns .btn { width: 84.500px; }

.hdots { position: absolute; height: 1px; width: 12px; border-top: 1px dotted #999; }
.hdots-main { left: 918px; top: 858px; }
.hdots-tree { left: 169px; top: 739px; }

.timep { height: 92px; flex: none; display: flex; flex-direction: column; }
.thead { height: 22px; gap: 7px; }
.thead .pclose { right: 2px; top: 3px; }
.timerow { height: 26px; flex: none; margin-top: 7px; display: flex; align-items: center; padding-left: 11px; }
.tl { margin-right: 7px; }
.field { width: 142px; height: 26px; background: #fff; border: 1px solid #c0c0c0; border-radius: 3px; display: flex; align-items: center; padding-left: 3px; margin-right: 6px; flex: none; }
.exp { margin-left: auto; display: flex; align-items: center; gap: 5px; margin-right: 18px; }
.statusrow { flex: 1; display: flex; align-items: center; padding: 9px 2px 0; }
.b-reset { width: 66px; height: 25px; margin-right: 7px; }
.hint { white-space: pre; }
.fps { margin-left: auto; }
```
